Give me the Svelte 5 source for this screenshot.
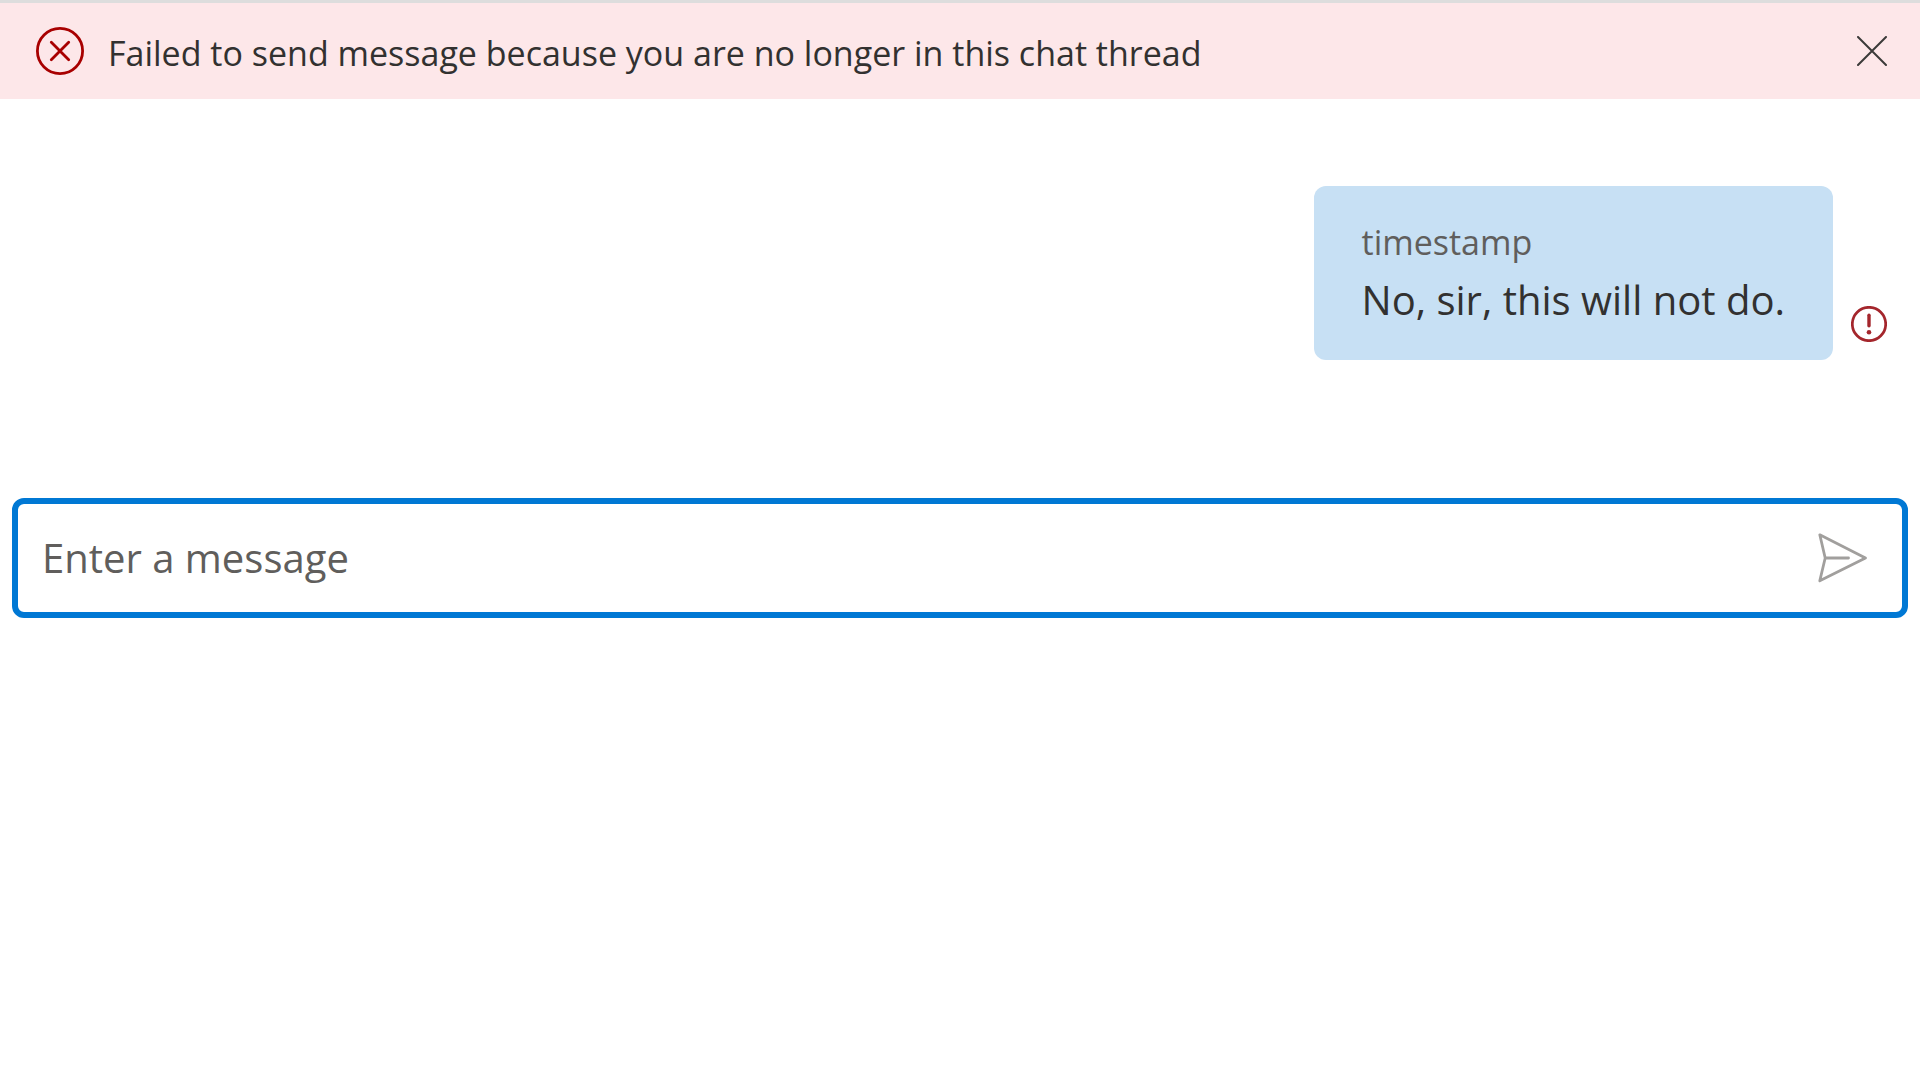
<script>
  let showError = $state(true);
  let message = $state('');
</script>

<main class="chat">
  {#if showError}
    <div class="banner" role="alert">
      <svg class="banner-icon" viewBox="0 0 48 48" aria-hidden="true">
        <circle cx="24" cy="24" r="22.6" />
        <path d="M15.3 15.3 32.7 32.7M32.7 15.3 15.3 32.7" />
      </svg>
      <p class="banner-text">Failed to send message because you are no longer in this chat thread</p>
      <button class="dismiss" type="button" aria-label="Dismiss" onclick={() => (showError = false)}>
        <svg viewBox="0 0 30 30" aria-hidden="true"><path d="M1 1 29 29M29 1 1 29" /></svg>
      </button>
    </div>
  {/if}

  <section class="thread" aria-label="Messages">
    <article class="bubble">
      <p class="time">timestamp</p>
      <p class="body">No, sir, this will not do.</p>
    </article>
    <svg class="status" viewBox="0 0 36 36" role="img" aria-label="Failed to send">
      <circle class="ring" cx="18" cy="18" r="16.7" />
      <path class="bar" d="M18 9.3V19.7" />
      <circle class="dot" cx="18" cy="26.3" r="2.3" />
    </svg>
  </section>

  <form class="composer" onsubmit={(e) => e.preventDefault()}>
    <input type="text" aria-label="Message" placeholder="Enter a message" bind:value={message} />
    <button class="send" type="submit" aria-label="Send">
      <svg viewBox="0 0 50 50" aria-hidden="true">
        <path d="M1.8 1.8 47.5 25 1.8 47.8 7.2 25ZM7.2 25H30.5" />
      </svg>
    </button>
  </form>
</main>

<style>
  :global(body) {
    background: #fff;
  }

  .chat {
    font-family: "Segoe UI", "Open Sans", "Noto Sans", sans-serif;
    color: #323130;
  }

  p {
    margin: 0;
  }

  button {
    display: flex;
    padding: 0;
    border: 0;
    background: none;
    cursor: pointer;
  }

  svg {
    display: block;
    flex: none;
    fill: none;
    stroke-linecap: round;
    stroke-linejoin: round;
  }

  .banner {
    display: flex;
    align-items: center;
    gap: 24px;
    padding: 22px 33px 22px 36px;
    border-top: 3px solid #dddddd;
    background: #fde7e9;
  }

  .banner-icon {
    width: 48px;
    height: 48px;
    stroke: #a80000;
    stroke-width: 2.8;
  }

  .banner-text {
    flex: 1;
    padding-top: 4px;
    font-size: 34px;
    line-height: 48px;
  }

  .dismiss svg {
    width: 30px;
    height: 30px;
    stroke: #3b3a39;
    stroke-width: 2;
  }

  .thread {
    display: flex;
    justify-content: flex-end;
    align-items: flex-end;
    gap: 18px;
    padding: 87px 33px 138px;
  }

  .bubble {
    padding: 32px 48px 26px;
    border-radius: 12px;
    background: #c7e0f4;
  }

  .time {
    color: #605e5c;
    font-size: 34px;
    line-height: 48px;
  }

  .body {
    font-size: 40px;
    line-height: 68px;
  }

  .status {
    width: 36px;
    height: 36px;
    margin-bottom: 18px;
    stroke: #a4262c;
  }

  .ring {
    stroke-width: 2.7;
  }

  .bar {
    stroke-width: 3.4;
  }

  .dot {
    fill: #a4262c;
    stroke: none;
  }

  .composer {
    display: flex;
    align-items: center;
    margin: 0 12px;
    padding: 24px 34px 24px 24px;
    border: 6px solid #0078d4;
    border-radius: 12px;
  }

  input {
    flex: 1;
    min-width: 0;
    height: 60px;
    padding: 0 0 2px;
    box-sizing: border-box;
    border: 0;
    outline: 0;
    background: none;
    color: inherit;
    font: inherit;
    font-size: 40px;
  }

  input::placeholder {
    color: #605e5c;
    opacity: 1;
  }

  .send svg {
    width: 50px;
    height: 50px;
    stroke: #a19f9d;
    stroke-width: 2.8;
  }
</style>
